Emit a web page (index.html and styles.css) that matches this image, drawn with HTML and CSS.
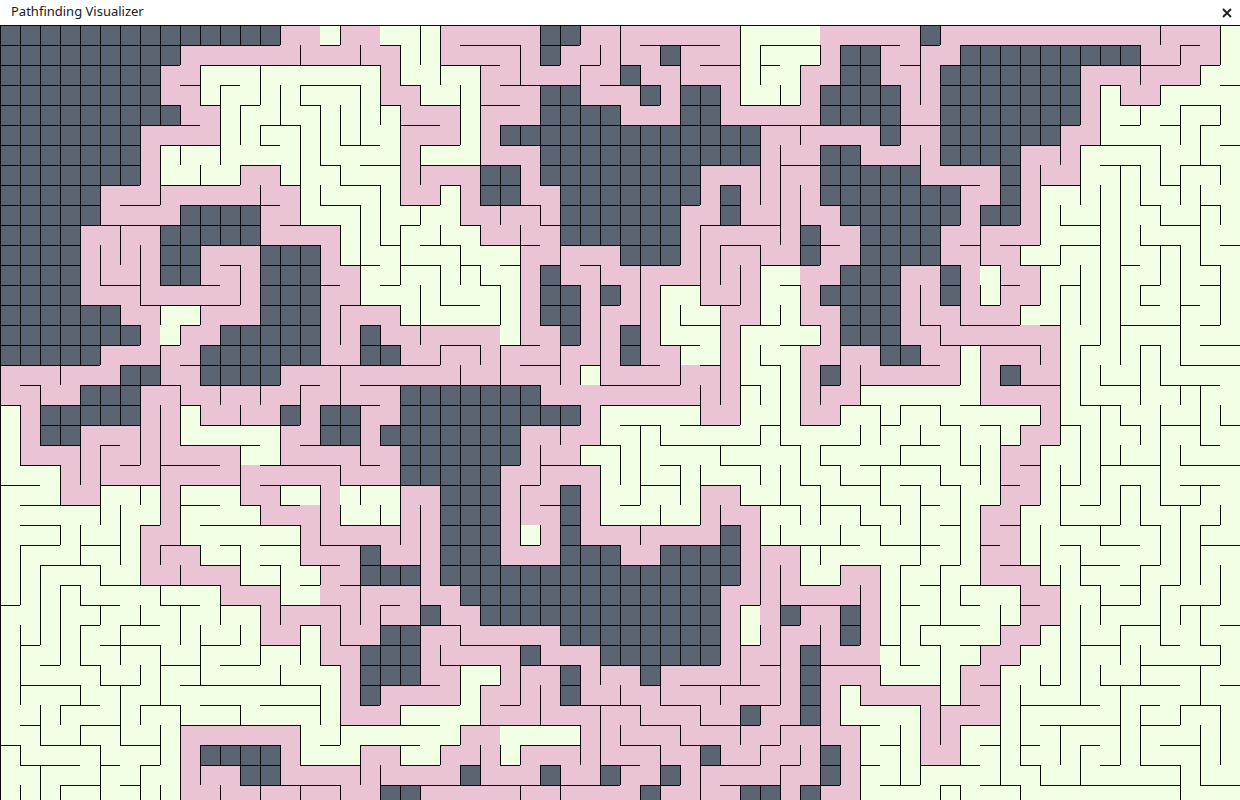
FILE: index.html
```html
<!DOCTYPE html>
<html lang="en">

<head>
    <meta charset="UTF-8" />
    <title>Pathfinding Visualizer</title>
    <link rel="stylesheet" href="styles.css">
</head>

<body>
    <header class="title-bar">
        <h1>Pathfinding Visualizer</h1>
        <button class="close" type="button" aria-label="Close">
            <svg viewBox="0 0 10 10" width="10" height="10">
                <path d="M1 1 L9 9 M9 1 L1 9" />
            </svg>
        </button>
    </header>

    <main class="maze" id="maze"></main>

    <script src="maze.js"></script>
</body>

</html>
```
FILE: styles.css
```css
* {
    box-sizing: border-box;
}

body {
    margin: 0;
    height: 100vh;
    display: flex;
    flex-direction: column;
    overflow: hidden;
    background-color: white;
    font-family: "Noto Sans", "Open Sans", sans-serif;
}

.title-bar {
    height: 25px;
    flex-shrink: 0;
    display: flex;
    justify-content: space-between;
    padding: 0 8px 0 11px;
}

.title-bar h1 {
    margin: 0;
    font-size: 13px;
    line-height: 23px;
    font-weight: normal;
    color: #1a1a1a;
}

.close {
    display: flex;
    align-items: center;
    padding: 0;
    border: none;
    background: none;
    cursor: pointer;
}

.close path {
    fill: none;
    stroke: #1a1a1a;
    stroke-width: 1.8;
}

.maze {
    flex: 1;
    min-height: 0;
    overflow: hidden;
}

.row {
    display: flex;
}

.cell {
    width: 20px;
    height: 20px;
    flex-shrink: 0;
    border: 0 solid #0a0a0a;
}

.open {
    background-color: #f1ffe5;
}

.path {
    background-color: #eac4d5;
}

.unvisited {
    background-color: #5a6473;
}

.wall-left {
    border-left-width: 1px;
}

.wall-top {
    border-top-width: 1px;
}
```
FILE: maze.js
```js
// one character per cell
// # = unvisited, 0-3 = open, 4-7 = on the path
// +1 = wall on the left, +2 = wall on top
const rows = [
    "##############76" + "27622376666##767" + "66666322266666#7" + "66666666667663",
    "#########7666645" + "64561156665#7455" + "6#76413225##7474" + "#########54741",
    "########74322322" + "222510327456474#" + "5656613074##565#" + "######76676430",
    "########56130113" + "22156101566##566" + "#5##51015####55#" + "######53543202",
    "#########5613012" + "11135661764####5" + "64##56664####54#" + "######51230321",
    "#######766411321" + "111076415#######" + "######767666#76#" + "#####741202130",
    "#######533210201" + "12205320566#####" + "######554##5645#" + "###76532221012",
    "#######510107611" + "21225766##5#####" + "###766576#####56" + "66#55412311321",
    "#####76476664561" + "12215435##56####" + "###5#5555#######" + "74#53211112110",
    "#####5664####741" + "221123056765####" + "##74#54556######" + "5##51101121031",
    "####7676#####566" + "611130125456####" + "##576665#56####7" + "47641221112210",
    "####5555##766###" + "511212212274766#" + "##557654#74####5" + "65630321123112",
    "####5545##565###" + "56303213125#5656" + "7645553264###76#" + "52563011301121",
    "####566566645###" + "74120110215##5#5" + "532545125####55#" + "51741311130121",
    "######5632764###" + "57661122015##574" + "5112741156###556" + "56430111120301",
    "#######5074#####" + "55#567666056#55#" + "5122532025###565" + "66646101322120",
    "#####76474######" + "54##54765764745#" + "563051127476##56" + "37665130131122",
    "766764##56####76" + "6766664545665356" + "645651215#556664" + "15#54111011222",
    "5654###765676747" + "4566#######54466" + "6645531157432222" + "05666112212330",
    "35#####5535454#5" + "##74#########532" + "2225410154321321" + "22225123101011",
    "15##766551222274" + "##5#######767412" + "3122203122013012" + "12174311213212",
    "1566574556663056" + "6656######554321" + "1222320213200320" + "11743011101120",
    "1225556476645666" + "6564#####7476611" + "1211221112123221" + "21561113221222",
    "3205432353225632" + "523276###574#510" + "3217610121221212" + "10741301311230",
    "1222211053202564" + "510155###556#512" + "0105563213212130" + "17430120112301",
    "1221101741222225" + "566655###515#566" + "7664#51100121012" + "15611223021130",
    "1320321576121225" + "66#545###564###5" + "4####57633202230" + "17411212201132",
    "1132210545661212" + "74###5##########" + "#####55510761303" + "05661132030111",
    "1113122232256612" + "4676656#########" + "####745566451121" + "32256121213001",
    "3011230123032576" + "65574#56########" + "####534#76#51301" + "20174113201330",
    "1111303201101543" + "554##7656666####" + "####515745#51132" + "20743110321012",
    "1301123210320321" + "56###55666#566##" + "####5745#5642121" + "27430132112021",
    "1120210132122010" + "25###5632576#576" + "#7664565#7661201" + "74301111032230",
    "1322123012222222" + "15#766417455#545" + "65667645#5356661" + "56112012322012",
    "1013201321221222" + "1564322056456676" + "56654#74#5122257" + "64132220130321",
    "1210321017666661" + "0322220762222555" + "6656674765630155" + "32112322132011",
    "3122212215####51" + "2076307451766556" + "656#54745#512154" + "12130130112211",
    "123203030576##56" + "6655664#564#54#7" + "4#5766474#530132" + "20121012022110",
    "1113212115456767" + "654##76666767664" + "#7456##5#7412203" + "12212222222122"
];

const maze = document.getElementById("maze");

rows.forEach(row => {
    const rowDiv = document.createElement("div");
    rowDiv.classList.add("row");
    for (const char of row) {
        const cell = document.createElement("div");
        cell.classList.add("cell");
        const unvisited = char === "#";
        const value = unvisited ? 3 : Number(char);
        cell.classList.add(unvisited ? "unvisited" : value > 3 ? "path" : "open");
        if (value & 1) cell.classList.add("wall-left");
        if (value & 2) cell.classList.add("wall-top");
        rowDiv.appendChild(cell);
    }
    maze.appendChild(rowDiv);
});
```
